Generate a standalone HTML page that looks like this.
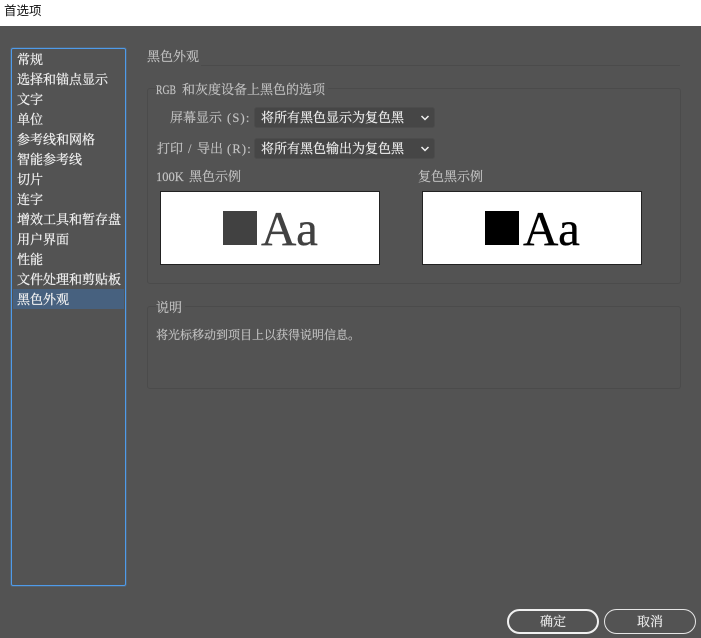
<!DOCTYPE html>
<html lang="zh">
<head>
<meta charset="utf-8">
<title>首选项</title>
<style>
html,body{margin:0;padding:0}
body{width:701px;height:638px;overflow:hidden;background:#535353;position:relative;font-family:"Liberation Serif","Noto Serif CJK SC",serif;font-size:13px;color:#c9c9c9}
.a{position:absolute;white-space:pre;line-height:20px}
#title{left:0;top:0;width:701px;height:26px;background:#fff}
#title span{position:absolute;left:4px;top:1px;line-height:20px;font-size:12.5px;color:#111;font-family:"Liberation Sans","Noto Sans CJK SC",sans-serif}
#list{left:11px;top:48px;width:113px;height:536px;border:1px solid #4f9bea;border-radius:2px;box-shadow:0 0 0 1px rgba(79,155,234,.22)}
.i{position:absolute;left:17px;line-height:20px;color:#f0f0f0;white-space:pre;-webkit-text-stroke:.25px #f0f0f0}
#sel{left:13px;top:289px;width:111px;height:20px;background:#47617f}
.box{position:absolute;border:1px solid #4b4b4b;border-radius:3px;box-sizing:border-box}
.leg{position:absolute;background:#535353;line-height:18px;white-space:pre;color:#c4c4c4;padding-right:3px;-webkit-text-stroke:.15px #c4c4c4}
.l{color:#c4c4c4;-webkit-text-stroke:.15px #c4c4c4}
.m{font-family:"Liberation Serif",serif;font-size:12.5px;display:inline-block;transform-origin:0 50%}
.sel{position:absolute;left:254px;width:181px;height:21px;box-sizing:border-box;background:#464646;border:1px solid #4c4c4c;border-radius:3px;color:#f0f0f0;line-height:19px;padding-left:6px;white-space:pre;-webkit-text-stroke:.2px #f0f0f0}
.sel svg{position:absolute;right:3px;top:5px}
.sample{position:absolute;top:191px;width:220px;height:74px;box-sizing:border-box;background:#fff;border:1px solid #222}
.sq{position:absolute;left:62px;top:19px;width:34px;height:34px}
.aa{position:absolute;left:100px;top:7px;font-size:49px;letter-spacing:-.3px;line-height:60px;font-family:"Liberation Serif",serif}
.btn{position:absolute;top:609px;height:25px;box-sizing:border-box;border-radius:13px;text-align:center;line-height:22px;color:#ececec;background:#535353;-webkit-text-stroke:.2px #ececec}
</style>
</head>
<body>
<div class="a" id="title"><span>首选项</span></div>

<div class="a" id="list"></div>
<div class="a" id="sel"></div>
<div class="i" style="top:50px">常规</div>
<div class="i" style="top:70px">选择和锚点显示</div>
<div class="i" style="top:90px">文字</div>
<div class="i" style="top:110px">单位</div>
<div class="i" style="top:130px">参考线和网格</div>
<div class="i" style="top:150px">智能参考线</div>
<div class="i" style="top:170px">切片</div>
<div class="i" style="top:190px">连字</div>
<div class="i" style="top:210px">增效工具和暂存盘</div>
<div class="i" style="top:230px">用户界面</div>
<div class="i" style="top:250px">性能</div>
<div class="i" style="top:270px">文件处理和剪贴板</div>
<div class="i" style="top:290px">黑色外观</div>

<div class="a l" style="left:147px;top:47px">黑色外观</div>
<div class="a" style="left:201px;top:65px;width:479px;height:1px;background:#4b4b4b"></div>

<div class="box" style="left:147px;top:88px;width:534px;height:196px"></div>
<div class="leg" style="left:156px;top:81px;width:169px;height:18px"></div>
<div class="a l m" style="left:156px;top:80px;transform:scaleX(.78)">RGB</div>
<div class="a l" style="left:182px;top:80px">和灰度设备上黑色的选项</div>

<div class="a l" style="left:170px;top:108px">屏幕显示</div>
<div class="a l m" style="left:227px;top:108px;letter-spacing:1.2px">(S):</div>
<div class="sel" style="top:107px">将所有黑色显示为复色黑<svg width="12" height="10" viewBox="0 0 12 10"><path d="M2.5 3 L6 6.5 L9.5 3" fill="none" stroke="#f0f0f0" stroke-width="1.5"/></svg></div>
<div class="a l" style="left:157px;top:139px">打印</div>
<div class="a l m" style="left:188px;top:139px">/</div>
<div class="a l" style="left:197px;top:139px">导出</div>
<div class="a l m" style="left:227px;top:139px;letter-spacing:1.2px">(R):</div>
<div class="sel" style="top:138px">将所有黑色输出为复色黑<svg width="12" height="10" viewBox="0 0 12 10"><path d="M2.5 3 L6 6.5 L9.5 3" fill="none" stroke="#f0f0f0" stroke-width="1.5"/></svg></div>

<div class="a l m" style="left:156px;top:167px">100K</div>
<div class="a l" style="left:189px;top:167px">黑色示例</div>
<div class="a l" style="left:418px;top:167px">复色黑示例</div>

<div class="sample" style="left:160px">
  <div class="sq" style="background:#414141"></div>
  <div class="aa" style="color:#414141;-webkit-text-stroke:.35px #414141">Aa</div>
</div>
<div class="sample" style="left:422px">
  <div class="sq" style="background:#000"></div>
  <div class="aa" style="color:#000;-webkit-text-stroke:.35px #000">Aa</div>
</div>

<div class="box" style="left:147px;top:306px;width:534px;height:83px"></div>
<div class="leg" style="left:156px;top:299px">说明</div>
<div class="a l" style="left:156px;top:325px;font-size:12px">将光标移动到项目上以获得说明信息。</div>

<div class="btn" style="left:507px;width:92px;border:2px solid #f0f0f0">确定</div>
<div class="btn" style="left:604px;width:92px;border:1px solid #e6e6e6;line-height:23px">取消</div>
</body>
</html>
